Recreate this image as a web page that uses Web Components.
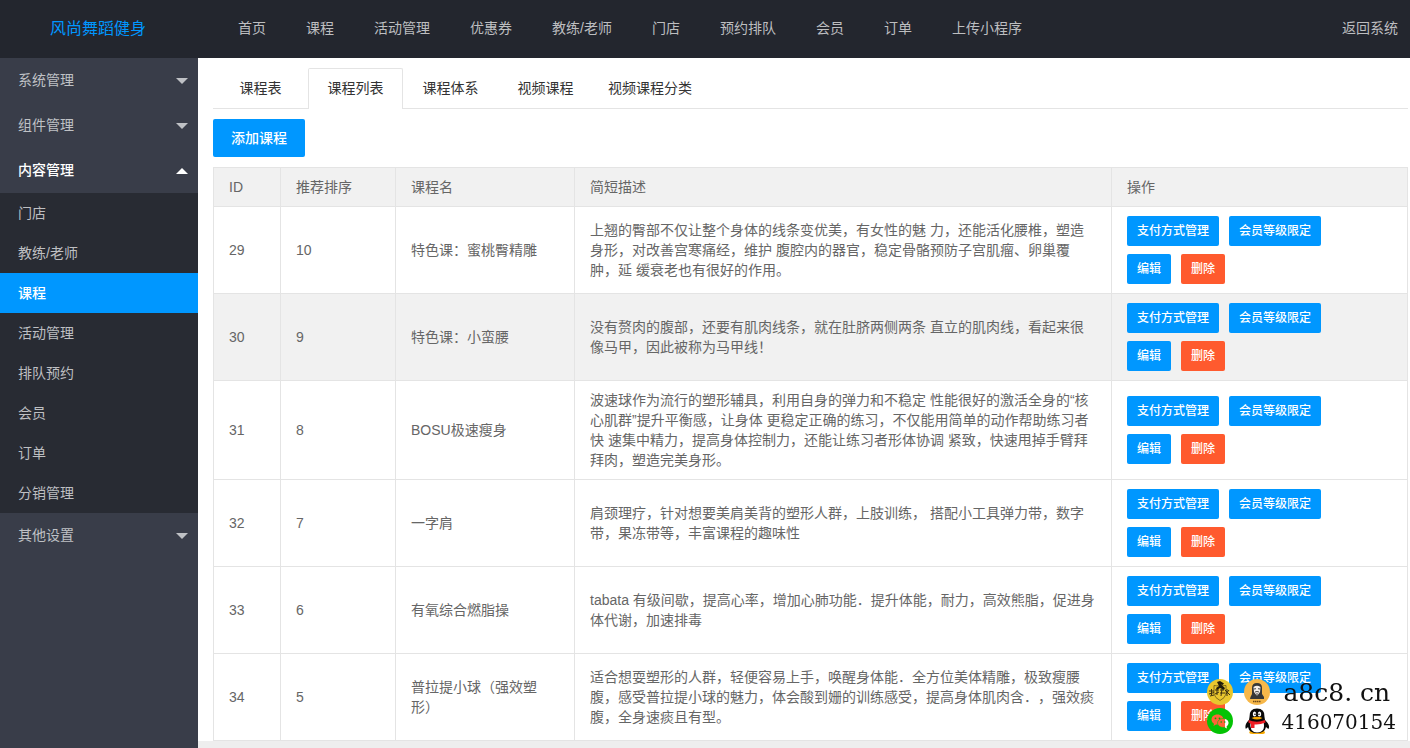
<!DOCTYPE html>
<html lang="zh-CN">
<head>
<meta charset="utf-8">
<meta name="viewport" content="width=device-width, initial-scale=1">
<title>课程列表 - 风尚舞蹈健身</title>
<style>
  :root { --blue: #0097ff; --danger: #ff5a2e; --line: #e4e4e4; --stripe: #f1f1f1; }
  body {
    margin: 0;
    font: 14px/20px "Liberation Sans", "Noto Sans CJK SC", sans-serif;
    color: #666;
    background: #fff;
    text-spacing-trim: space-all;
  }
</style>
</head>
<body>
<admin-app></admin-app>
<script>
class BaseElement extends HTMLElement {
  render(css, html) {
    const root = this.attachShadow({ mode: 'open' });
    root.innerHTML = `<style>*{box-sizing:border-box}a{color:inherit;text-decoration:none}${css}</style>${html}`;
    return root;
  }
}

/* Dark bar with the brand, main navigation and the way back */
customElements.define('admin-header', class extends BaseElement {
  connectedCallback() {
    const items = ['首页', '课程', '活动管理', '优惠券', '教练/老师', '门店', '预约排队', '会员', '订单', '上传小程序'];
    this.render(`
      :host { display: flex; align-items: center; height: 58px; padding-bottom: 2px; box-sizing: border-box; background: #23262e; color: #bdbec0; white-space: nowrap; }
      .brand { flex: 0 0 198px; padding: 2px 2px 0 0; text-align: center; font-size: 16px; color: var(--blue); }
      nav { flex: 1; display: flex; gap: 40px; padding-left: 40px; }
      .back { padding: 0 12px; }
      a:hover { color: #fff; }`,
      `<a class="brand" href="#">风尚舞蹈健身</a>
       <nav>${items.map(t => `<a href="#">${t}</a>`).join('')}</nav>
       <a class="back" href="#">返回系统</a>`);
  }
});

/* One collapsible group of the side menu; its links are slotted */
customElements.define('menu-group', class extends BaseElement {
  connectedCallback() {
    this.render(`
      :host { display: block; }
      button { display: flex; align-items: center; justify-content: space-between; width: 100%; height: 45px; margin: 0; padding: 0 10px 1px 18px; border: 0; background: none; font: inherit; color: #bfc1c5; cursor: pointer; }
      i { border: 6px solid transparent; border-top-color: currentColor; border-bottom: 0; margin-top: 1px; }
      :host([open]) button { color: #fff; font-weight: 500; }
      :host([open]) i { border-top: 0; border-bottom: 6px solid currentColor; }
      div { display: none; background: #282b33; }
      :host([open]) div { display: block; }`,
      `<button type="button" aria-expanded="${this.hasAttribute('open')}">${this.getAttribute('label')}<i></i></button>
       <div><slot></slot></div>`)
      .querySelector('button').addEventListener('click', e => {
        const open = this.toggleAttribute('open');
        e.currentTarget.setAttribute('aria-expanded', open);
      });
  }
});

customElements.define('side-menu', class extends BaseElement {
  connectedCallback() {
    const links = ['门店', '教练/老师', '课程', '活动管理', '排队预约', '会员', '订单', '分销管理'];
    this.render(`
      :host { display: block; background: #393d49; }
      a { display: block; height: 40px; padding: 10px 18px; color: #bebfc2; }
      a[aria-current] { background: var(--blue); color: #fff; font-weight: 500; }`,
      `<menu-group label="系统管理"></menu-group>
       <menu-group label="组件管理"></menu-group>
       <menu-group label="内容管理" open>
         ${links.map(t => `<a href="#"${t === '课程' ? ' aria-current="page"' : ''}>${t}</a>`).join('')}
       </menu-group>
       <menu-group label="其他设置"></menu-group>`);
  }
});

customElements.define('page-tabs', class extends BaseElement {
  connectedCallback() {
    const tabs = ['课程表', '课程列表', '课程体系', '视频课程', '视频课程分类'];
    this.render(`
      :host { display: flex; height: 41px; border-bottom: 1px solid var(--line); box-sizing: border-box; color: #333; }
      a { min-width: 95px; height: 41px; padding: 9px 14px; border: 1px solid transparent; border-bottom: 0; text-align: center; }
      a[aria-current] { border-color: var(--line); border-radius: 2px 2px 0 0; background: #fff; }`,
      tabs.map((t, i) => `<a href="#"${i === 1 ? ' aria-current="page"' : ''}>${t}</a>`).join(''));
  }
});

customElements.define('action-button', class extends BaseElement {
  connectedCallback() {
    this.render(`
      :host { display: inline-flex; }
      button { height: 38px; margin: 0; padding: 0 18px; border: 0; border-radius: 2px; background: var(--blue); color: #fff; font: inherit; font-weight: 500; white-space: nowrap; cursor: pointer; }
      :host([small]) button { height: 30px; padding: 0 10px; font-size: 12px; }
      :host([danger]) button { background: var(--danger); }
      button:hover { opacity: .9; }`,
      `<button type="button"><slot></slot></button>`);
  }
});

customElements.define('course-table', class extends BaseElement {
  connectedCallback() {
    const active = 30;
    const rows = [
      [29, 10, '特色课：蜜桃臀精雕', '上翘的臀部不仅让整个身体的线条变优美，有女性的魅 力，还能活化腰椎，塑造身形，对改善宫寒痛经，维护 腹腔内的器官，稳定骨骼预防子宫肌瘤、卵巢覆肿，延 缓衰老也有很好的作用。'],
      [30, 9, '特色课：小蛮腰', '没有赘肉的腹部，还要有肌肉线条，就在肚脐两侧两条 直立的肌肉线，看起来很像马甲，因此被称为马甲线！'],
      [31, 8, 'BOSU极速瘦身', '波速球作为流行的塑形辅具，利用自身的弹力和不稳定 性能很好的激活全身的“核心肌群”提升平衡感，让身体 更稳定正确的练习，不仅能用简单的动作帮助练习者快 速集中精力，提高身体控制力，还能让练习者形体协调 紧致，快速甩掉手臂拜拜肉，塑造完美身形。'],
      [32, 7, '一字肩', '肩颈理疗，针对想要美肩美背的塑形人群，上肢训练， 搭配小工具弹力带，数字带，果冻带等，丰富课程的趣味性'],
      [33, 6, '有氧综合燃脂操', 'tabata 有级间歇，提高心率，增加心肺功能．提升体能，耐力，高效熊脂，促进身体代谢，加速排毒'],
      [34, 5, '普拉提小球（强效塑形）', '适合想耍塑形的人群，轻便容易上手，唤醒身体能．全方位美体精雕，极致瘦腰腹，感受普拉提小球的魅力，体会酸到姗的训练感受，提高身体肌肉含．，强效痰腹，全身速痰且有型。']
    ];
    const ops = `<div><action-button small>支付方式管理</action-button><action-button small>会员等级限定</action-button></div>
      <div><action-button small>编辑</action-button><action-button small danger>删除</action-button></div>`;
    this.render(`
      :host { display: block; }
      table { width: 100%; table-layout: fixed; border-collapse: collapse; }
      th, td { padding: 9px 15px; border: 1px solid var(--line); text-align: left; font-weight: 400; vertical-align: middle; }
      thead, tr.active, tbody tr:hover { background: var(--stripe); }
      .id { width: 67px; } .sort { width: 115px; } .name { width: 179px; } .ops { width: 296px; }
      td div { display: flex; gap: 10px; }
      td div + div { margin-top: 8px; }`,
      `<table>
        <thead><tr><th class="id">ID</th><th class="sort">推荐排序</th><th class="name">课程名</th><th>简短描述</th><th class="ops">操作</th></tr></thead>
        <tbody>${rows.map(r => `<tr${r[0] === active ? ' class="active"' : ''}>${r.map(c => `<td>${c}</td>`).join('')}<td>${ops}</td></tr>`).join('')}</tbody>
      </table>`);
  }
});

/* Contact badge that floats over the page corner */
customElements.define('contact-badge', class extends BaseElement {
  connectedCallback() {
    this.render(`
      :host { position: fixed; right: 14px; bottom: 12px; display: grid; grid-template-columns: 26px 26px auto; grid-template-rows: 28px 30px; column-gap: 11px; align-items: center; pointer-events: none; font-family: "DejaVu Serif", serif; color: #111; white-space: nowrap; }
      svg { display: block; width: 26px; height: 26px; overflow: visible; }
      .site { font-size: 25px; line-height: 28px; padding: 2px 0 0 2px; }
      .qq { font-size: 20px; line-height: 30px; padding-top: 2px; }`,
      `<svg viewBox="0 0 26 26"><circle cx="13" cy="13" r="13" fill="#e9c72e"/>
        <path d="M7 6.5Q13 7.5 13 5.5Q14 7.5 19 6.5V15Q18 19 13 21.5Q8 19 7 15Z" fill="none" stroke="#68551a" stroke-width=".8"/>
        <path d="M10 3L13 2L17 4.500L15.500 6L14 5.500L18 9L17 11L13 9L10 11L9 9L12 7Z" fill="#211b0b"/>
        <g stroke="#3d3010" stroke-width="1" fill="none"><path d="M2 12H7M4.500 10V16M2 15L7 13.500M3 17L7 16M8 11H12M10 10V16M8 15L12 13M13 11H17M15 10L14 17M13 14H18M18 11L23 16M19 15L22 11M20 10V17"/></g></svg>
       <svg viewBox="0 0 26 26"><circle cx="13" cy="13" r="13" fill="#f7b84a"/>
        <path d="M6.500 18L8 15V9Q8 4 13 4Q18 4 18 9V15L20 18V20H6Z" fill="#373737"/>
        <path d="M9.500 8Q13 5.500 16.500 8L16 13L13 17L10 13Z" fill="#f5eee9"/>
        <path d="M10 10L12 9.700M14 9.700L16 10M11 13Q13 12 15 13M13 14V17" fill="none" stroke="#333" stroke-width=".9"/>
        <path d="M9 22.500H17" stroke="#6c4918" stroke-width="1.300" stroke-dasharray="1.500 .5"/></svg>
       <span class="site">a8c8. cn</span>
       <svg viewBox="0 0 26 26"><circle cx="13" cy="13" r="13" fill="#04c304"/>
        <path d="M10.500 6.500C6.500 6.500 4.500 9 4.500 11.500C4.500 13.500 5.500 14.800 7 15.700L6.500 18L9 16.500C14 17 16.500 14.500 16.500 11.500C16.500 9 14 6.500 10.500 6.500Z" fill="#ff6338"/>
        <path d="M16 10.500C20 10.500 21.500 13 21.500 15C21.500 16.500 20.500 17.700 19.500 18.500L20 20.500L17.500 19.300C13.500 20 10.500 17.500 10.500 15C10.500 12.500 13 10.500 16 10.500Z" fill="#ff6338" stroke="#04c304" stroke-width=".6"/>
        <path d="M18 11C21 12 21.500 13.500 21.500 15C21.500 16.500 20.500 17.700 19.500 18.500L20 20.500L18 19.500Z" fill="#fff"/>
        <g fill="#04a504"><circle cx="8.500" cy="10.300" r=".9"/><circle cx="12.500" cy="10.300" r=".9"/><circle cx="14.200" cy="14" r=".8"/><circle cx="17.800" cy="14" r=".8"/></g></svg>
       <svg viewBox="0 0 26 26"><path d="M7 22Q2.500 26 9 26H13L19 26Q23 25 19 22Z" fill="#f7a900"/>
        <path d="M5.500 9Q5 .5 13 .5Q21 .5 20.500 9L21 12Q27 18 24.500 21Q23 20 22 19Q21 25 13 25Q5 25 4 19Q2.500 21 1.500 20.500Q.5 16 5 12Z" fill="#090909"/>
        <path d="M6.500 14Q13 17 19.500 14Q22 24 13 24.500Q5 24 6.500 14Z" fill="#fff"/>
        <ellipse cx="10.500" cy="6" rx="1.700" ry="2.600" fill="#fff"/><ellipse cx="15.500" cy="6" rx="1.700" ry="2.600" fill="#fff"/>
        <circle cx="11" cy="6.300" r=".8"/><circle cx="15" cy="6.300" r=".8"/>
        <path d="M7.500 10Q13 7.500 18.500 10Q13 13 7.500 10Z" fill="#f7a900"/>
        <path d="M4.500 12Q13 15.500 21 12L21.500 14.500Q16 17 10.500 16.500V20H7V16L4.500 14.500Z" fill="#ed1c24"/></svg>
       <span class="qq">416070154</span>`);
  }
});

customElements.define('admin-app', class extends BaseElement {
  connectedCallback() {
    this.render(`
      :host { display: grid; grid-template: auto 1fr / 198px minmax(0, 1fr); min-height: 100vh; }
      admin-header { grid-column: 1 / -1; }
      main { display: flex; flex-direction: column; align-items: stretch; }
      section { display: flex; flex-direction: column; gap: 10px; padding: 10px 2px 0 15px; }
      action-button { align-self: flex-start; }
      footer { flex: 1; background: #eee; }`,
      `<admin-header></admin-header>
       <side-menu></side-menu>
       <main>
         <section>
           <page-tabs></page-tabs>
           <action-button>添加课程</action-button>
           <course-table></course-table>
         </section>
         <footer></footer>
       </main>
       <contact-badge></contact-badge>`);
  }
});
</script>
</body>
</html>
